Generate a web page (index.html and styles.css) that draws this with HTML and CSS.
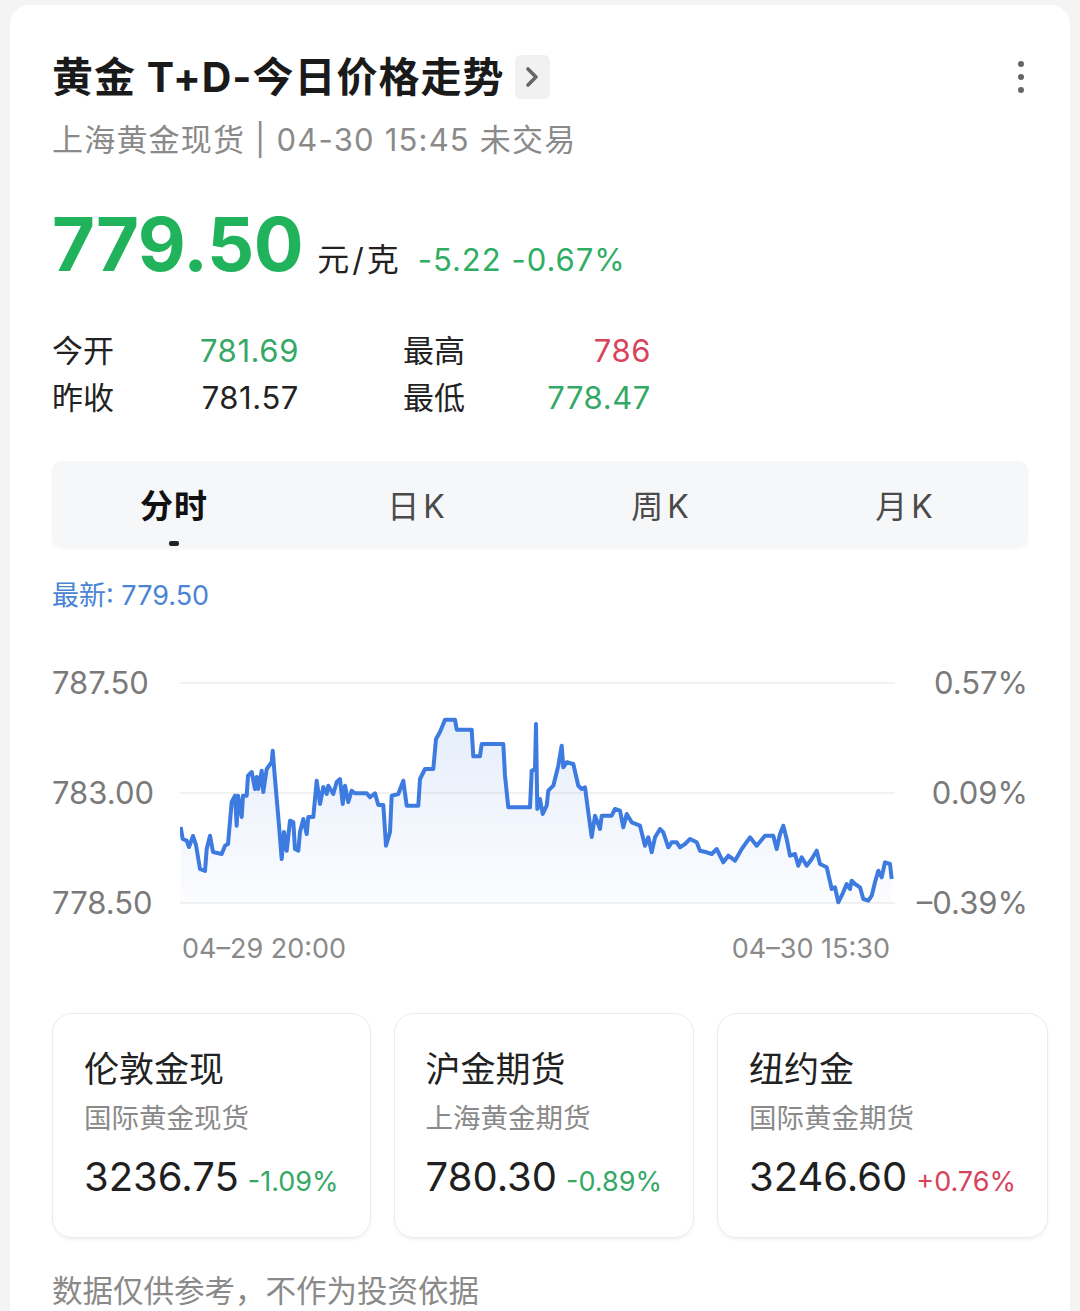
FILE: index.html
```html
<!DOCTYPE html>
<html lang="zh-CN">
<head>
  <meta charset="UTF-8">
  <meta name="viewport" content="width=device-width, initial-scale=1.0">
  <title>黄金 T+D-今日价格走势</title>
  <link rel="stylesheet" href="styles.css">
</head>
<body>
  <div class="panel">
    <div class="header">
      <h1 class="title">黄金 T+D-今日价格走势</h1>
      <span class="more-btn">
        <svg width="14" height="22" viewBox="0 0 14 22"><path d="M3 3 L11 11 L3 19" fill="none" stroke="#666" stroke-width="3.6" stroke-linecap="round" stroke-linejoin="round"/></svg>
      </span>
      <span class="menu">
        <i></i><i></i><i></i>
      </span>
    </div>
    <div class="subtitle">上海黄金现货 | 04-30 15:45 未交易</div>

    <div class="price-row">
      <span class="price">779.50</span>
      <span class="unit">元/克</span>
      <span class="change">-5.22 -0.67%</span>
    </div>

    <div class="stats">
      <div class="stat"><span>今开</span><span class="down">781.69</span></div>
      <div class="stat"><span>最高</span><span class="up">786</span></div>
      <div class="stat"><span>昨收</span><span>781.57</span></div>
      <div class="stat"><span>最低</span><span class="down">778.47</span></div>
    </div>

    <div class="tabs">
      <div class="tab active">分时</div>
      <div class="tab">日K</div>
      <div class="tab">周K</div>
      <div class="tab">月K</div>
    </div>

    <div class="latest">最新: 779.50</div>

    <div class="chart">
      <div class="axis axis-left">
        <span>787.50</span>
        <span>783.00</span>
        <span>778.50</span>
      </div>
      <svg class="plot" width="715" height="268" viewBox="180 660 715 268">
        <defs>
          <linearGradient id="fillGrad" x1="0" y1="0" x2="0" y2="1">
            <stop offset="0" stop-color="#3d7be0" stop-opacity="0.13"/>
            <stop offset="1" stop-color="#3d7be0" stop-opacity="0.02"/>
          </linearGradient>
        </defs>
        <line x1="180" y1="684" x2="895" y2="684" stroke="#ededed" stroke-width="1.5"/>
        <line x1="180" y1="794" x2="895" y2="794" stroke="#ededed" stroke-width="1.5"/>
        <line x1="180" y1="904" x2="895" y2="904" stroke="#ededed" stroke-width="1.5"/>
        <polygon id="area" fill="url(#fillGrad)" points=""/>
        <polyline id="line" fill="none" stroke="#3d7be0" stroke-width="4" stroke-linejoin="round" points="180.7,828 182.7,840 186.7,841.7 189,848 193,837 196,846 200,870 205,872 206.7,850 210,836.7 213,853 221.7,855 225,846.7 228,845 231.7,803 235,796.7 236.7,826.7 238,796.7 241.7,818 243,796.7 246.7,796.7 248,776.7 251.7,773 255,790 256.7,778 258.3,790 261.7,771.7 263.3,793 266.7,770 271.7,763 272.7,751.7 275,780 277.3,806.7 279.3,830 281.7,860 284,833 286.7,851.7 290,821.7 293.3,823 295,850 298.3,851.7 300,833 303.3,820 306.7,835 308.3,818 313.3,818 316.7,781.7 320,805 323.3,788 326.7,795 328.3,786.7 333.3,795 336.7,783 340,780 342.7,805 345,786.7 348.3,803 351.7,791.7 355,794.3 366.7,794.3 370,798.3 375,794.3 378.3,806 383.3,806 386,846.7 390,833 391.7,796.7 398.3,795 403.3,781.7 406.7,806.7 418.3,806.7 420,780 425,770 433.3,770 436,740 440,733 445,720.7 455,720.7 456.7,730.7 471.7,730.7 473.3,757.3 480,757.3 481.7,745 503.3,745 505,776.7 508.3,808.3 530,808.3 531.7,771.7 535,770 536,725 537.3,810 540,800 542.7,815 546.7,806.7 548.3,791.7 553.3,786.7 558.3,766.7 561.7,746.7 563.3,768.3 566.7,763.3 573.3,765 578.3,786.7 581.7,790 585,788.3 588.3,813.3 591.7,838 595,816.7 600,830 601.7,816.7 611.7,816.7 615,810 620,811.7 623.3,828.3 626.7,815 631.7,823.3 640,826.7 645,846.7 648.3,838.3 651.7,853.3 655,838.3 660,830 663.3,833.3 668.3,848.3 671.7,843.3 676.7,843.3 680,848.3 685,845 690,840 696.7,843.3 700,851.7 706.7,853.3 711.7,855 716.7,850 723.3,863.3 728.3,856.7 735,861.7 741.7,850 750,838.3 756.7,846.7 765,836.7 773.3,836.7 776.7,850 780,835 783.3,826.7 786.7,840 790,856.7 795,855 798.3,866.7 801.7,858.3 806.7,866.7 811.7,860 816.7,851.7 820,865 826.7,868.3 831.7,890 835,888.3 838.3,903.3 841.7,896.7 846.7,885 850,890 851.7,881.7 855,885 860,888.3 863.3,900 868.3,901.7 871.7,896.7 875,883.3 878.3,871.7 881.7,878.3 885,863.3 890,865 891.7,880"/>
      </svg>
      <div class="axis axis-right">
        <span>0.57%</span>
        <span>0.09%</span>
        <span>–0.39%</span>
      </div>
    </div>
    <div class="x-axis">
      <span>04–29 20:00</span>
      <span>04–30 15:30</span>
    </div>

    <div class="quotes">
      <div class="quote">
        <div class="quote-name">伦敦金现</div>
        <div class="quote-desc">国际黄金现货</div>
        <div class="quote-value"><span>3236.75</span><span class="quote-change down">-1.09%</span></div>
      </div>
      <div class="quote">
        <div class="quote-name">沪金期货</div>
        <div class="quote-desc">上海黄金期货</div>
        <div class="quote-value"><span>780.30</span><span class="quote-change down">-0.89%</span></div>
      </div>
      <div class="quote">
        <div class="quote-name">纽约金</div>
        <div class="quote-desc">国际黄金期货</div>
        <div class="quote-value"><span>3246.60</span><span class="quote-change up">+0.76%</span></div>
      </div>
    </div>

    <div class="footnote">数据仅供参考，不作为投资依据</div>
  </div>

  <script>
    // fill area under the price line
    const line = document.getElementById("line");
    const pts = line.getAttribute("points").trim().split(/\s+/);
    const first = pts[0].split(",")[0];
    const last = pts[pts.length - 1].split(",")[0];
    document.getElementById("area").setAttribute("points", pts.join(" ") + " " + last + ",904 " + first + ",904");
  </script>
</body>
</html>
```

FILE: styles.css
```css
body {
  margin: 0;
  padding: 0;
  background-color: #f4f4f4;
  color: #1f1f1f;
  font-family: Inter, "Noto Sans CJK SC", sans-serif;
  overflow: hidden;
}

.panel {
  margin: 5px 10px 0;
  padding: 44px 42px 0;
  background-color: #ffffff;
  border-radius: 20px 20px 0 0;
  min-height: 1306px;
  box-sizing: border-box;
}

.header {
  display: flex;
  align-items: center;
  height: 56px;
}
.title {
  margin: 0;
  font-size: 41px;
  font-weight: 700;
  letter-spacing: 1px;
  color: #1a1a1a;
  line-height: 56px;
}
.more-btn {
  display: flex;
  align-items: center;
  justify-content: center;
  width: 35px;
  height: 44px;
  margin-left: 10px;
  background-color: #f1f1f1;
  border-radius: 6px;
}
.menu {
  margin-left: auto;
  margin-right: 4px;
  display: flex;
  flex-direction: column;
  gap: 7px;
}
.menu i {
  display: block;
  width: 6px;
  height: 6px;
  border-radius: 50%;
  background-color: #666;
}

.subtitle {
  margin-top: 15px;
  font-size: 31px;
  letter-spacing: 1.2px;
  line-height: 40px;
  color: #8a8a8a;
}

.price-row {
  display: flex;
  align-items: baseline;
  margin-top: 39px;
  line-height: 90px;
}
.price {
  font-size: 74px;
  font-weight: 700;
  color: #21b35c;
  letter-spacing: -0.5px;
}
.unit {
  margin-left: 14px;
  font-size: 32px;
  letter-spacing: 3px;
  color: #222;
}
.change {
  margin-left: 16px;
  font-size: 31px;
  letter-spacing: 1px;
  color: #2fae63;
}

.stats {
  display: grid;
  grid-template-columns: 247px 248px;
  column-gap: 104px;
  margin-top: 22px;
  font-size: 31px;
  line-height: 47px;
}
.stat {
  display: flex;
  justify-content: space-between;
  color: #222;
}
.stat span:last-child {
  letter-spacing: 0.6px;
}
.down {
  color: #35a866;
}
.up {
  color: #d8435b;
}

.tabs {
  display: grid;
  grid-template-columns: repeat(4, 1fr);
  margin-top: 40px;
  height: 86px;
  background-color: #f6f7f8;
  border-radius: 10px;
  box-shadow: 0 2px 3px rgba(0, 0, 0, 0.04);
}
.tab {
  position: relative;
  display: flex;
  align-items: center;
  justify-content: center;
  font-size: 32px;
  letter-spacing: 4px;
  color: #4a4a4a;
}
.tab.active {
  font-size: 33px;
  font-weight: 700;
  letter-spacing: 1px;
  color: #111;
}
.tab.active::after {
  content: "";
  position: absolute;
  left: 50%;
  bottom: 1px;
  width: 10px;
  height: 5px;
  margin-left: -5px;
  border-radius: 2px;
  background-color: #222;
}

.latest {
  margin-top: 29px;
  font-size: 27px;
  line-height: 40px;
  color: #4a84d4;
}

.chart {
  display: flex;
  margin-top: 43px;
  height: 268px;
}
.axis {
  display: flex;
  flex-direction: column;
  justify-content: space-between;
  font-size: 31px;
  line-height: 48px;
  color: #7a7a7a;
}
.axis-left {
  width: 128px;
}
.axis-right {
  flex: 1;
  text-align: right;
}
.plot {
  display: block;
  flex-shrink: 0;
}

.x-axis {
  display: flex;
  justify-content: space-between;
  width: 708px;
  margin-left: 130px;
  margin-top: 4px;
  font-size: 27px;
  line-height: 36px;
  color: #8a8a8a;
}

.quotes {
  display: flex;
  gap: 23px;
  margin-top: 46px;
  margin-right: -30px;
}
.quote {
  flex-shrink: 0;
  padding: 33px 31px 30px;
  border: 1px solid #ebebeb;
  border-radius: 20px;
  box-shadow: 0 2px 3px rgba(0, 0, 0, 0.05);
}
.quote-name {
  font-size: 35px;
  line-height: 44px;
  color: #222;
}
.quote-desc {
  margin-top: 9px;
  font-size: 27.5px;
  line-height: 36px;
  color: #8a8a8a;
}
.quote-value {
  display: flex;
  align-items: baseline;
  gap: 9px;
  margin-top: 16px;
  font-size: 40px;
  line-height: 50px;
  color: #1f1f1f;
}
.quote-change {
  font-size: 27px;
}

.footnote {
  margin-top: 33px;
  font-size: 30.5px;
  line-height: 40px;
  color: #8a8a8a;
}
```
